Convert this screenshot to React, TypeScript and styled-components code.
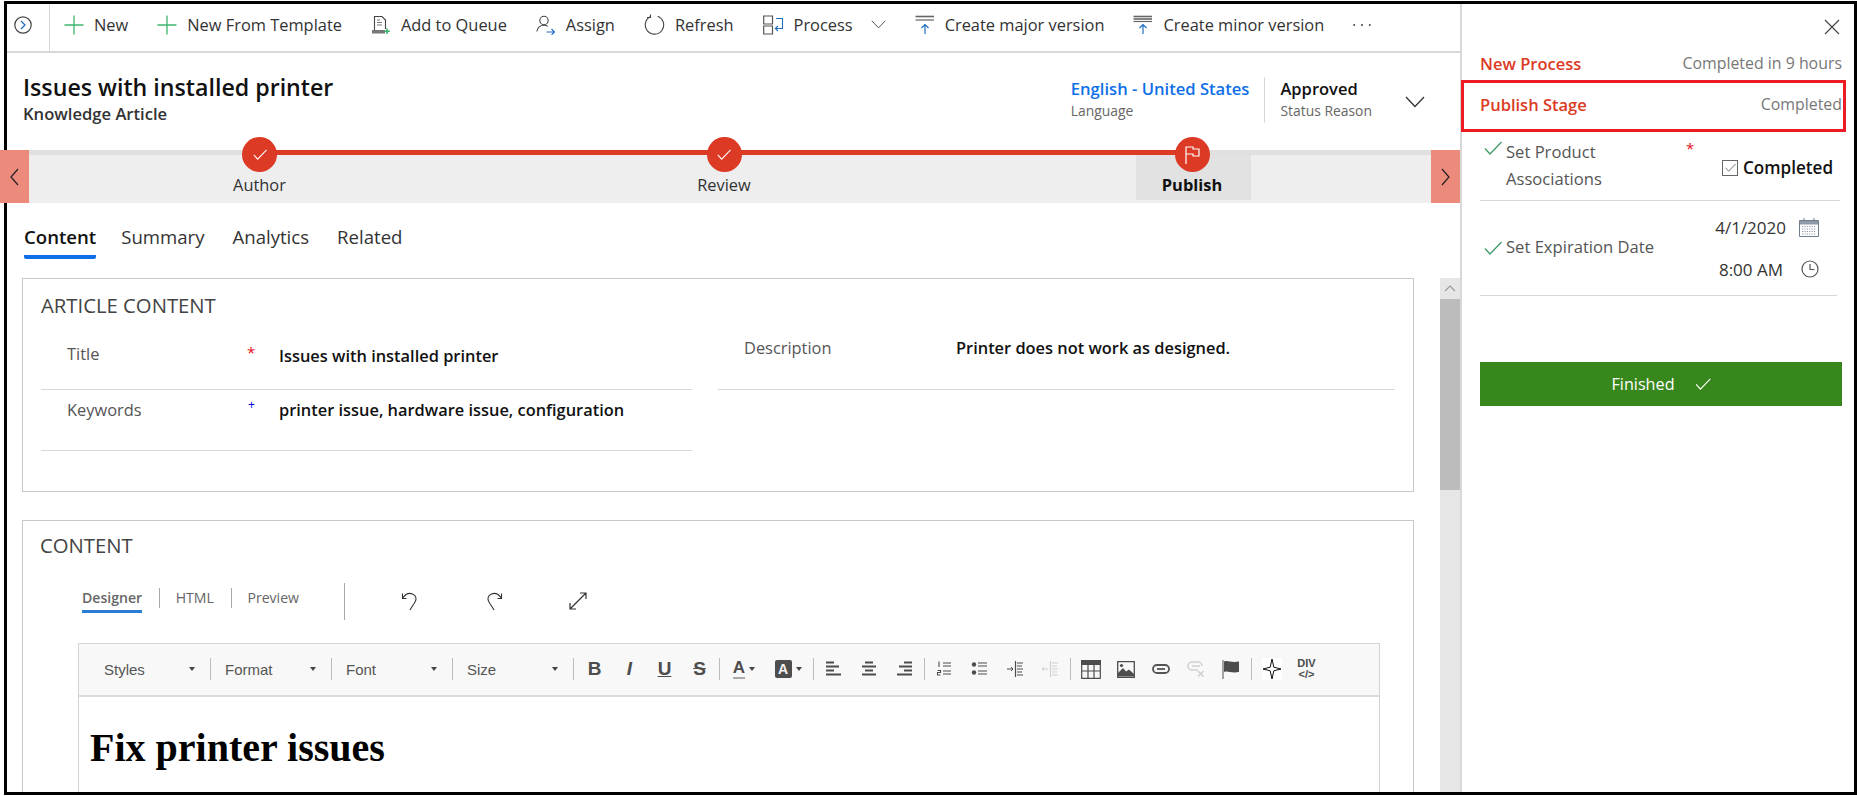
import styled, { createGlobalStyle } from 'styled-components';
import React from 'react';

const GlobalStyle = createGlobalStyle`
  html, body {
    margin: 0;
    padding: 0;
    background: #fff;
    overflow: hidden;
  }
  body {
    padding: 1px 0 0 4px;
    font-family: "Open Sans", "Noto Sans", sans-serif;
    color: #333;
  }
  * { box-sizing: border-box; }
`

const commands = [
  { label: 'New', icon: <PlusIcon /> },
  { label: 'New From Template', icon: <PlusIcon /> },
  { label: 'Add to Queue', icon: <QueueIcon /> },
  { label: 'Assign', icon: <AssignIcon /> },
  { label: 'Refresh', icon: <RefreshIcon /> },
  { label: 'Process', icon: <ProcessIcon />, chevron: true },
  { label: 'Create major version', icon: <VersionIcon bars={1} /> },
  { label: 'Create minor version', icon: <VersionIcon bars={2} /> },
];

function PlusIcon() {
  return (
    <svg width="20" height="20" viewBox="0 0 20 20" fill="none" stroke="#3db56e" strokeWidth="1.3">
      <path d="M10 0.5V19.5M0.5 10H19.5" />
    </svg>
  );
}

function QueueIcon() {
  return (
    <svg width="20" height="20" viewBox="0 0 20 20" fill="none">
      <path d="M3.5 15V1.5H11L14.5 5V14" stroke="#444" strokeWidth="1.1" />
      <path d="M6 5H9M6 7.5H11M6 10H11" stroke="#777" strokeWidth="1" />
      <path d="M1 15H14V18.5H1Z" fill="#777" />
      <path d="M16 13.5V19M13.3 16.2H18.8" stroke="#3db56e" strokeWidth="1.6" />
    </svg>
  );
}

function AssignIcon() {
  return (
    <svg width="20" height="20" viewBox="0 0 20 20" fill="none">
      <circle cx="8" cy="5.5" r="4.2" stroke="#444" strokeWidth="1.1" />
      <path d="M0.8 16.5C1.5 12.5 4 10.3 8 10.3C9.5 10.3 10.7 10.7 11.8 11.4" stroke="#444" strokeWidth="1.1" />
      <path d="M10.5 17H18.5M15.5 14L18.5 17L15.5 20" stroke="#1e6fc0" strokeWidth="1.1" />
    </svg>
  );
}

function RefreshIcon() {
  return (
    <svg width="21" height="21" viewBox="0 0 21 21" fill="none" stroke="#444" strokeWidth="1.1">
      <path d="M6.6 2.6A9.2 9.2 0 1 0 13.6 2.3" />
      <path d="M6.5 0.5V3.5H3" />
    </svg>
  );
}

function ProcessIcon() {
  return (
    <svg width="21" height="20" viewBox="0 0 21 20" fill="none">
      <path d="M0.7 1H9.5V9H0.7ZM0.7 11H9.5V19H0.7Z" stroke="#555" strokeWidth="1.2" />
      <path d="M13 3.5H19.5V13.5H12.5M15 11L12.3 13.5L15 16" stroke="#1e6fc0" strokeWidth="1.1" />
    </svg>
  );
}

function VersionIcon({ bars }: { bars: number }) {
  return (
    <svg width="20" height="20" viewBox="0 0 20 20" fill="none">
      <path d="M0.5 1.5H19" stroke="#666" strokeWidth="1.6" />
      {bars > 1 ? <path d="M0.5 4H19" stroke="#666" strokeWidth="1.6" /> : <path d="M0.5 5H19" stroke="#444" strokeWidth="1" />}
      {bars > 1 && <path d="M0.5 6.5H19" stroke="#666" strokeWidth="1.2" />}
      <path d="M10 19V9.5M6.5 13L10 9.5L13.5 13" stroke="#1e6fc0" strokeWidth="1.2" />
    </svg>
  );
}

function ChevronDown({ size, color }: { size: number; color: string }) {
  return (
    <svg width={size} height={size * 0.6} viewBox="0 0 20 12" fill="none" stroke={color} strokeWidth="1.3">
      <path d="M1 1L10 10.5L19 1" />
    </svg>
  );
}

function CheckMark({ color, width, height }: { color: string; width: number; height: number }) {
  return (
    <svg width={width} height={height} viewBox="0 0 18 14" fill="none" stroke={color} strokeWidth="1.3">
      <path d="M1 7.5L6 13L17.5 1" />
    </svg>
  );
}

function CalendarIcon() {
  return (
    <svg width="20" height="19" viewBox="0 0 20 19" fill="none">
      <path d="M0.5 2.5H19.5V18.5H0.5Z" stroke="#6f7d8c" />
      <path d="M1 3H19V6.5H1Z" fill="#8d99a6" />
      <path d="M5 0V3M15 0V3" stroke="#6f7d8c" />
      <path d="M3 8.5H17M3 11H17M3 13.5H17M3 16H17" stroke="#8d99a6" strokeDasharray="1.2 1.2" />
    </svg>
  );
}

function ClockIcon() {
  return (
    <svg width="18" height="18" viewBox="0 0 18 18" fill="none" stroke="#555" strokeWidth="1.2">
      <circle cx="9" cy="9" r="8" />
      <path d="M9 4V9.5H13.5" />
    </svg>
  );
}

const glyph = (path: React.ReactNode, muted?: boolean) => (
  <svg width="18" height="18" viewBox="0 0 18 18" fill="none" stroke={muted ? '#cfcfcf' : '#4d4d4d'} strokeWidth="1.8">
    {path}
  </svg>
);

const alignGroup = [
  glyph(<path d="M1 2.5H9M1 6.5H14M1 10.5H9M1 14.5H16" />),
  glyph(<path d="M5 2.5H13M2 6.5H16M5 10.5H13M2 14.5H16" />),
  glyph(<path d="M9 2.5H17M4 6.5H17M9 10.5H17M2 14.5H17" />),
];

const listGroup = [
  glyph(
    <>
      <path d="M7 3H15M7 6H15M7 11H15M7 14H15" strokeWidth="1.2" />
      <path d="M3 1.5V7M1.5 10.5H4.5V12.5H1.5V15H4.5" strokeWidth="1.1" />
    </>,
  ),
  glyph(
    <>
      <path d="M7 3H16M7 6H16M7 11H16M7 14H16" strokeWidth="1.2" />
      <circle cx="3" cy="4.5" r="2.2" fill="#4d4d4d" stroke="none" />
      <circle cx="3" cy="12.5" r="2.2" fill="#4d4d4d" stroke="none" />
    </>,
  ),
  glyph(
    <>
      <path d="M9.5 1V17" strokeWidth="1.2" />
      <path d="M11 3H17M11 6H16M11 9H17M11 12H16M11 15H17" strokeWidth="1" />
      <path d="M1 9H7M5 7L7 9L5 11" strokeWidth="1" />
    </>,
  ),
  glyph(
    <>
      <path d="M9.5 1V17" strokeWidth="1.2" />
      <path d="M11 3H17M11 6H16M11 9H17M11 12H16M11 15H17" strokeWidth="1" />
      <path d="M7 9H1M3 7L1 9L3 11" strokeWidth="1" />
    </>,
    true,
  ),
];

const insertGroup = [
  <svg width="20" height="19" viewBox="0 0 20 19" key="table" fill="none">
    <path d="M0 0H20V5H0Z" fill="#4d4d4d" />
    <path d="M0.7 4H19.3V18.3H0.7ZM0.7 11H19.3M7 4V18.3M13 4V18.3" stroke="#4d4d4d" strokeWidth="1.2" />
  </svg>,
  <svg width="18" height="17" viewBox="0 0 18 17" key="image" fill="none">
    <path d="M0.7 0.7H17.3V16.3H0.7Z" stroke="#4d4d4d" strokeWidth="1.3" />
    <path d="M1 15.5V12L6 7L9 10.5L12 8.5L17 13V15.5Z" fill="#4d4d4d" />
    <circle cx="4.5" cy="4.5" r="1.6" fill="#4d4d4d" />
  </svg>,
  <svg width="18" height="10" viewBox="0 0 18 10" key="link" fill="none" stroke="#555" strokeWidth="1.8">
    <rect x="1" y="1" width="16" height="8" rx="4" />
    <path d="M5 5H13" />
  </svg>,
  <svg width="18" height="16" viewBox="0 0 18 16" key="unlink" fill="none" stroke="#cfcfcf" strokeWidth="1.5">
    <path d="M11 9H5A4 4 0 0 1 5 1H11A4 4 0 0 1 15 5" />
    <path d="M5 5H13M11 10L16.5 15.5M16.5 10L11 15.5" />
  </svg>,
  <svg width="18" height="19" viewBox="0 0 18 19" key="flag" fill="none">
    <path d="M1 0V19" stroke="#777" strokeWidth="1.3" />
    <path d="M2 1.5C6 0 9 3 17 1.5V12C9 13.5 6 10.5 2 12Z" fill="#4d4d4d" />
  </svg>,
];

export default function App() {
  return (
    <Frame>
      <GlobalStyle />
      <Main>
        <CommandBar>
          <ToggleButton>
            <svg width="20" height="20" viewBox="0 0 20 20" fill="none">
              <circle cx="10" cy="10" r="8.2" stroke="#444" strokeWidth="1.2" />
              <path d="M8 6L12 10L8 14" stroke="#1e6fc0" strokeWidth="1.3" />
            </svg>
          </ToggleButton>
          <CommandList>
            {commands.map((c) => (
              <CommandItem key={c.label}>
                {c.icon}
                <span>{c.label}</span>
                {c.chevron && (
                  <ChevronSlot>
                    <ChevronDown size={15} color="#555" />
                  </ChevronSlot>
                )}
              </CommandItem>
            ))}
            <svg width="18" height="4" viewBox="0 0 18 4" fill="#444">
              <circle cx="1.2" cy="2" r="1" />
              <circle cx="9" cy="2" r="1" />
              <circle cx="16.8" cy="2" r="1" />
            </svg>
          </CommandList>
        </CommandBar>

        <Header>
          <div>
            <Title>Issues with installed printer</Title>
            <Subtitle>Knowledge Article</Subtitle>
          </div>
          <HeaderMeta>
            <MetaBlock>
              <MetaLink>English - United States</MetaLink>
              <MetaCaption>Language</MetaCaption>
            </MetaBlock>
            <MetaStatus>
              <MetaValue>Approved</MetaValue>
              <MetaCaption>Status Reason</MetaCaption>
            </MetaStatus>
            <ChevronDown size={20} color="#333" />
          </HeaderMeta>
        </Header>

        <ProcessBar>
          <ArrowTile>
            <svg width="9" height="18" viewBox="0 0 9 18" fill="none" stroke="#222" strokeWidth="1.2">
              <path d="M8 1L1 9L8 17" />
            </svg>
          </ArrowTile>
          <Stages>
            <StageLine />
            <Stage>
              <StageDot>
                <CheckMark color="#fff" width={14} height={11} />
              </StageDot>
              <StageLabel>Author</StageLabel>
            </Stage>
            <Stage>
              <StageDot>
                <CheckMark color="#fff" width={14} height={11} />
              </StageDot>
              <StageLabel>Review</StageLabel>
            </Stage>
            <Stage $active>
              <StageDot>
                <svg width="15" height="18" viewBox="0 0 15 18" fill="none" stroke="#fff" strokeWidth="1.2">
                  <path d="M1 0.5V18M1 1H8V3H14V10H8V8H1" />
                </svg>
              </StageDot>
              <StageLabel $active>Publish</StageLabel>
            </Stage>
          </Stages>
          <ArrowTile>
            <svg width="9" height="18" viewBox="0 0 9 18" fill="none" stroke="#222" strokeWidth="1.2">
              <path d="M1 1L8 9L1 17" />
            </svg>
          </ArrowTile>
        </ProcessBar>

        <TabBar>
          <Tab $active>Content</Tab>
          <Tab>Summary</Tab>
          <Tab>Analytics</Tab>
          <Tab>Related</Tab>
        </TabBar>

        <ContentArea>
          <Cards>
            <ArticleCard>
              <CardHeading $top={14}>ARTICLE CONTENT</CardHeading>
              <FieldGrid>
                <FieldColumn>
                  <Field $height={64} $top={16}>
                    <FieldLabel>Title</FieldLabel>
                    <Required>*</Required>
                    <FieldValue $shift={2}>Issues with installed printer</FieldValue>
                  </Field>
                  <Field $height={61} $top={8}>
                    <FieldLabel>Keywords</FieldLabel>
                    <Recommended>+</Recommended>
                    <FieldValue>printer issue, hardware issue, configuration</FieldValue>
                  </Field>
                </FieldColumn>
                <FieldColumn>
                  <Field $height={64} $top={10}>
                    <FieldLabel>Description</FieldLabel>
                    <span />
                    <FieldValue>Printer does not work as designed.</FieldValue>
                  </Field>
                </FieldColumn>
              </FieldGrid>
            </ArticleCard>

            <ContentCard>
              <CardHeading $top={12} $left={17}>CONTENT</CardHeading>
              <ModeBar>
                <ModeTab $active>Designer</ModeTab>
                <ModeTab>HTML</ModeTab>
                <ModeTab $last>Preview</ModeTab>
                <ModeActions>
                  <svg width="18" height="20" viewBox="0 0 18 20" fill="none" stroke="#333" strokeWidth="1.1">
                    <path d="M5.5 7.5H1.5V2.5M1.5 7L5 3.5C9 1 15 3 15 8C15 11 11 15 9 19" />
                  </svg>
                  <svg width="18" height="20" viewBox="0 0 18 20" fill="none" stroke="#333" strokeWidth="1.1">
                    <path d="M12.5 7.5H16.5V2.5M16.5 7L13 3.5C9 1 3 3 3 8C3 11 7 15 9 19" />
                  </svg>
                  <svg width="18" height="18" viewBox="0 0 18 18" fill="none" stroke="#333" strokeWidth="1.2">
                    <path d="M1 17L17 1M11 1H17V7M1 11V17H7" />
                  </svg>
                </ModeActions>
              </ModeBar>
              <Editor>
                <EditorToolbar>
                  {['Styles', 'Format', 'Font', 'Size'].map((name) => (
                    <Combo key={name}>
                      {name}
                      <Caret />
                    </Combo>
                  ))}
                  <ToolGroup>
                    <TextTool>B</TextTool>
                    <TextTool $italic>I</TextTool>
                    <TextTool $underline>U</TextTool>
                    <TextTool $strike>S</TextTool>
                  </ToolGroup>
                  <ToolGroup>
                    <ColorTool>
                      <ColorA>A</ColorA>
                      <Caret />
                    </ColorTool>
                    <ColorTool>
                      <ColorBox>A</ColorBox>
                      <Caret />
                    </ColorTool>
                  </ToolGroup>
                  <ToolGroup>
                    {alignGroup.map((g, i) => (
                      <Tool key={i}>{g}</Tool>
                    ))}
                  </ToolGroup>
                  <ToolGroup>
                    {listGroup.map((g, i) => (
                      <Tool key={i}>{g}</Tool>
                    ))}
                  </ToolGroup>
                  <ToolGroup>
                    {insertGroup.map((g, i) => (
                      <Tool key={i}>{g}</Tool>
                    ))}
                  </ToolGroup>
                  <ToolGroup $last>
                    <Tool>
                      <StarSlot>
                        <svg width="18" height="20" viewBox="0 0 18 20" fill="none" stroke="#111" strokeWidth="1">
                          <path d="M9 0L10.8 8.2L18 10L10.8 11.8L9 20L7.2 11.8L0 10L7.2 8.2Z" />
                        </svg>
                      </StarSlot>
                    </Tool>
                    <Tool>
                      <DivGlyph>
                        <span>DIV</span>
                        <span>{'</>'}</span>
                      </DivGlyph>
                    </Tool>
                  </ToolGroup>
                </EditorToolbar>
                <EditorBody>
                  <h1>Fix printer issues</h1>
                </EditorBody>
              </Editor>
            </ContentCard>
          </Cards>
          <ScrollTrack>
            <ScrollUp>
              <svg width="12" height="7" viewBox="0 0 12 7" fill="none" stroke="#999" strokeWidth="1.1">
                <path d="M1 6L6 1L11 6" />
              </svg>
            </ScrollUp>
            <ScrollThumb />
          </ScrollTrack>
        </ContentArea>
      </Main>

      <Panel>
        <CloseRow>
          <svg width="16" height="16" viewBox="0 0 16 16" fill="none" stroke="#444" strokeWidth="1.2">
            <path d="M1 1L15 15M15 1L1 15" />
          </svg>
        </CloseRow>
        <PanelHead>
          <PanelTitle>New Process</PanelTitle>
          <PanelNote>Completed in 9 hours</PanelNote>
        </PanelHead>
        <StageBox>
          <PanelTitle>Publish Stage</PanelTitle>
          <PanelNote>Completed</PanelNote>
        </StageBox>
        <StepRow $height={69} $top={6}>
          <StepCheck $top={3}>
            <CheckMark color="#3f9a6b" width={18} height={14} />
          </StepCheck>
          <StepLabel>
            Set Product
            <br />
            Associations
          </StepLabel>
          <StepRequired>*</StepRequired>
          <CheckField>
            <CheckBox>
              <CheckMark color="#555" width={11} height={9} />
            </CheckBox>
            <strong>Completed</strong>
          </CheckField>
        </StepRow>
        <StepRow $height={95} $center $inset={3}>
          <StepCheck>
            <CheckMark color="#3f9a6b" width={18} height={14} />
          </StepCheck>
          <StepLabel $shift={-3}>Set Expiration Date</StepLabel>
          <DateColumn>
            <DateRow>
              4/1/2020
              <CalendarIcon />
            </DateRow>
            <DateRow $gap={18}>
              8:00 AM
              <ClockIcon />
            </DateRow>
          </DateColumn>
        </StepRow>
        <FinishButton>
          Finished
          <CheckMark color="#fff" width={16} height={12} />
        </FinishButton>
      </Panel>
    </Frame>
  );
}

const Frame = styled.div`
  width: 1853px;
  height: 794px;
  border: 3px solid #000;
  display: flex;
`
const Main = styled.div`
  width: 1453px;
  display: flex;
  flex-direction: column;
  min-height: 0;
`
const CommandBar = styled.div`
  height: 49px;
  flex: none;
  display: flex;
  border-bottom: 2px solid #d8d8d8;
`
const ToggleButton = styled.div`
  width: 43px;
  padding: 0 0 6px 6px;
  display: flex;
  align-items: center;
  border-right: 1px solid #d8d8d8;
`
const CommandList = styled.div`
  display: flex;
  align-items: center;
  gap: 29px;
  padding: 0 0 6px 14px;
`
const CommandItem = styled.div`
  display: flex;
  align-items: center;
  gap: 10px;
  font-size: 16.4px;
  color: #333;
  white-space: nowrap;
`
const ChevronSlot = styled.span`
  display: flex;
  margin-left: 8px;
`
const Header = styled.div`
  height: 97px;
  flex: none;
  display: flex;
  justify-content: space-between;
  align-items: flex-start;
  padding: 19px 35px 0 16px;
`
const Title = styled.div`
  font-size: 23.2px;
  line-height: 30px;
  font-weight: 600;
  color: #111;
`
const Subtitle = styled.div`
  font-size: 16.6px;
  line-height: 23px;
  font-weight: 600;
  color: #333;
`
const HeaderMeta = styled.div`
  display: flex;
  align-items: center;
  margin-top: 5px;
  svg { margin-top: 4px; }
`
const MetaBlock = styled.div`
  display: flex;
  flex-direction: column;
  padding-right: 15px;
`
const MetaStatus = styled(MetaBlock)`
  border-left: 1px solid #d8d8d8;
  padding: 0 33px 0 15px;
`
const MetaLink = styled.div`
  font-size: 16.6px;
  line-height: 24px;
  font-weight: 600;
  color: #0f6fe8;
`
const MetaValue = styled.div`
  font-size: 16.5px;
  line-height: 24px;
  font-weight: 600;
  color: #111;
`
const MetaCaption = styled.div`
  font-size: 13.9px;
  line-height: 20px;
  padding-bottom: 2px;
  color: #666;
`
const ProcessBar = styled.div`
  height: 53px;
  flex: none;
  margin-left: -7px;
  display: flex;
  background: linear-gradient(#e0e0e0 5px, #eeeeee 5px);
`
const ArrowTile = styled.div`
  width: 29px;
  flex: none;
  background: #ec8b7b;
  display: flex;
  align-items: center;
  justify-content: center;
`
const Stages = styled.div`
  flex: 1;
  display: grid;
  grid-template-columns: 461px 468px 468px;
  position: relative;
`
const StageLine = styled.div`
  position: absolute;
  top: 0;
  left: 230px;
  width: 933px;
  height: 5px;
  background: #dc3a24;
`
const Stage = styled.div<{ $active?: boolean }>`
  position: relative;
  display: flex;
  flex-direction: column;
  align-items: center;
  ${(p) =>
    p.$active &&
    `
    &::before {
      content: '';
      position: absolute;
      top: 5px;
      left: 178px;
      width: 115px;
      height: 45px;
      background: #e2e2e2;
    }
  `}
`
const StageDot = styled.div`
  width: 35px;
  height: 35px;
  margin-top: -13px;
  border-radius: 50%;
  background: #dc3a24;
  display: flex;
  align-items: center;
  justify-content: center;
  position: relative;
`
const StageLabel = styled.div<{ $active?: boolean }>`
  position: relative;
  margin-top: 1px;
  font-size: 16.4px;
  line-height: 24px;
  font-weight: ${(p) => (p.$active ? 700 : 400)};
  color: ${(p) => (p.$active ? '#111' : '#333')};
`
const TabBar = styled.div`
  height: 75px;
  flex: none;
  display: flex;
  gap: 28px;
  padding: 20px 0 0 17px;
`
const Tab = styled.div<{ $active?: boolean }>`
  height: 36px;
  font-size: 18.6px;
  line-height: 28px;
  margin-right: ${(p) => (p.$active ? -3 : 0)}px;
  font-weight: ${(p) => (p.$active ? 600 : 400)};
  color: ${(p) => (p.$active ? '#111' : '#333')};
  border-bottom: ${(p) => (p.$active ? '4px solid #0f6fe8' : 'none')};
  border-radius: 2px;
`
const ContentArea = styled.div`
  flex: 1;
  min-height: 0;
  display: flex;
  overflow: hidden;
`
const Cards = styled.div`
  width: 1433px;
  padding: 0 26px 0 15px;
  display: flex;
  flex-direction: column;
  gap: 28px;
`
const Card = styled.div`
  border: 1px solid #c8c8c8;
  flex: none;
`
const ArticleCard = styled(Card)`
  height: 214px;
  padding: 0 18px;
`
const ContentCard = styled(Card)`
  height: 400px;
`
const CardHeading = styled.div<{ $top: number; $left?: number }>`
  font-size: 20.3px;
  line-height: 24px;
  color: #444;
  padding: ${(p) => p.$top}px 0 0 ${(p) => p.$left || 0}px;
`
const FieldGrid = styled.div`
  display: grid;
  grid-template-columns: 651px 677px;
  gap: 26px;
  margin-top: 9px;
`
const FieldColumn = styled.div`
  display: flex;
  flex-direction: column;
`
const Field = styled.div<{ $height: number; $top: number }>`
  height: ${(p) => p.$height}px;
  padding: ${(p) => p.$top}px 0 0 26px;
  display: grid;
  grid-template-columns: 183px 29px 1fr;
  align-items: start;
  border-bottom: 1px solid #d8d8d8;
  font-size: 16.4px;
  line-height: 24px;
`
const FieldLabel = styled.div`
  color: #555;
`
const FieldValue = styled.div<{ $shift?: number }>`
  font-weight: 600;
  color: #111;
  margin-top: ${(p) => p.$shift || 0}px;
`
const Required = styled.span`
  color: #e81123;
  font-size: 15px;
  line-height: 20px;
  margin-left: -3px;
`
const Recommended = styled.span`
  color: #0000e0;
  font-size: 12px;
  line-height: 14px;
  margin-left: -2px;
`
const ModeBar = styled.div`
  height: 37px;
  margin: 26px 0 23px 59px;
  display: flex;
  align-items: flex-start;
`
const ModeTab = styled.div<{ $active?: boolean; $last?: boolean }>`
  position: relative;
  font-size: 14.1px;
  line-height: 20px;
  margin-top: 5px;
  color: #666;
  font-weight: ${(p) => (p.$active ? 600 : 400)};
  margin-right: ${(p) => (p.$last ? 45 : 33.5)}px;
  padding-bottom: 2px;
  border-bottom: ${(p) => (p.$active ? '3px solid #2b7cd3' : 'none')};
  &::after {
    content: '';
    display: ${(p) => (p.$last ? 'none' : 'block')};
    position: absolute;
    right: -18px;
    top: 0;
    height: 20px;
    border-right: 1px solid #aaa;
  }
`
const ModeActions = styled.div`
  height: 37px;
  border-left: 1px solid #aaa;
  display: flex;
  align-items: center;
  gap: 66px;
  padding: 0 0 2px 56px;
`
const Editor = styled.div`
  margin: 0 33px 0 55px;
  border: 1px solid #d4d4d4;
  height: 300px;
`
const EditorToolbar = styled.div`
  height: 53px;
  background: #f8f8f8;
  border-bottom: 2px solid #dcdcdc;
  display: flex;
  align-items: center;
  padding: 0 0 1px 11px;
  font-family: "Liberation Sans", Arial, sans-serif;
`
const Combo = styled.div`
  width: 121px;
  height: 22px;
  padding: 0 15px 0 14px;
  display: flex;
  align-items: center;
  justify-content: space-between;
  border-right: 1px solid #bbb;
  font-size: 15px;
  color: #555;
`
const Caret = styled.span`
  width: 0;
  height: 0;
  border-left: 3.5px solid transparent;
  border-right: 3.5px solid transparent;
  border-top: 4px solid #444;
`
const ToolGroup = styled.div<{ $last?: boolean }>`
  display: flex;
  align-items: center;
  height: 22px;
  padding: 0 3px 0 2px;
  border-right: ${(p) => (p.$last ? 'none' : '1px solid #bbb')};
`
const Tool = styled.div`
  width: 35px;
  height: 22px;
  display: flex;
  align-items: center;
  justify-content: center;
`
const TextTool = styled(Tool)<{ $italic?: boolean; $underline?: boolean; $strike?: boolean }>`
  padding-left: 2px;
  font-size: 19px;
  font-weight: 700;
  color: #4d4d4d;
  font-style: ${(p) => (p.$italic ? 'italic' : 'normal')};
  text-decoration: ${(p) => (p.$underline ? 'underline' : p.$strike ? 'line-through' : 'none')};
`
const ColorTool = styled.div`
  width: 44px;
  height: 22px;
  display: flex;
  align-items: center;
  justify-content: center;
  gap: 4px;
`
const ColorA = styled.span`
  font-size: 17px;
  line-height: 18px;
  font-weight: 700;
  color: #4d4d4d;
  border-bottom: 2px solid #aaa;
`
const ColorBox = styled.span`
  width: 17px;
  height: 18px;
  border-radius: 2px;
  background: #4d4d4d;
  color: #f4f4f4;
  font-size: 14px;
  line-height: 18px;
  font-weight: 700;
  text-align: center;
`
const StarSlot = styled.div`
  width: 20px;
  height: 22px;
  background: #fff;
  display: flex;
  align-items: center;
  justify-content: center;
`
const DivGlyph = styled.div`
  display: flex;
  flex-direction: column;
  align-items: center;
  font-size: 11px;
  line-height: 11px;
  font-weight: 700;
  color: #4d4d4d;
`
const EditorBody = styled.div`
  padding: 29px 0 0 11px;
  h1 {
    margin: 0;
    font-family: "Liberation Serif", "Times New Roman", serif;
    font-size: 40px;
    line-height: 44px;
    font-weight: 700;
    color: #000;
  }
`
const ScrollTrack = styled.div`
  width: 20px;
  background: #e6e6e6;
  display: flex;
  flex-direction: column;
`
const ScrollUp = styled.div`
  height: 21px;
  display: flex;
  align-items: center;
  justify-content: center;
`
const ScrollThumb = styled.div`
  height: 191px;
  background: #bcbcbc;
`
const Panel = styled.div`
  flex: 1;
  border-left: 2px solid #d8d8d8;
  padding: 0 12px 0 18px;
  display: flex;
  flex-direction: column;
`
const CloseRow = styled.div`
  height: 46px;
  padding: 15px 2px 0 0;
  display: flex;
  justify-content: flex-end;
`
const PanelHead = styled.div`
  height: 30px;
  padding-bottom: 4px;
  display: flex;
  align-items: center;
  justify-content: space-between;
`
const StageBox = styled(PanelHead)`
  height: 52px;
  margin: 0 -4px 0 -19px;
  padding: 0 1px 4px 16px;
  border: 3px solid #ed1c24;
`
const PanelTitle = styled.div`
  font-size: 16.5px;
  font-weight: 600;
  color: #dc3a24;
`
const PanelNote = styled.div`
  font-size: 15.9px;
  color: #777;
`
const StepRow = styled.div<{ $height: number; $top?: number; $center?: boolean; $inset?: number }>`
  height: ${(p) => p.$height}px;
  padding-top: ${(p) => p.$top || 0}px;
  margin-right: ${(p) => 2 + (p.$inset || 0)}px;
  display: flex;
  align-items: ${(p) => (p.$center ? 'center' : 'flex-start')};
  border-bottom: 1px solid #d8d8d8;
`
const StepCheck = styled.div<{ $top?: number }>`
  width: 26px;
  padding: 0 4px;
  display: flex;
  margin-top: ${(p) => p.$top || 0}px;
`
const StepLabel = styled.div<{ $shift?: number }>`
  font-size: 16.6px;
  line-height: 27px;
  color: #555;
  width: 180px;
  white-space: nowrap;
  margin-top: ${(p) => p.$shift || 0}px;
`
const StepRequired = styled.div`
  width: 36px;
  color: #e81123;
  font-size: 15px;
  line-height: 20px;
`
const CheckField = styled.div`
  display: flex;
  align-items: center;
  gap: 5px;
  margin-top: 18px;
  font-size: 17.1px;
  color: #111;
  strong { font-weight: 600; }
`
const CheckBox = styled.div`
  width: 16px;
  height: 16px;
  border: 1px solid #666;
  display: flex;
  align-items: center;
  justify-content: center;
`
const DateColumn = styled.div`
  margin-left: auto;
  padding-right: 18px;
`
const DateRow = styled.div<{ $gap?: number }>`
  height: 42px;
  display: flex;
  align-items: center;
  justify-content: flex-end;
  gap: ${(p) => p.$gap || 13}px;
  font-size: 17px;
  color: #333;
`
const FinishButton = styled.div`
  height: 44px;
  margin-top: 66px;
  background: #38871c;
  color: #fff;
  font-size: 16.2px;
  display: flex;
  align-items: center;
  justify-content: center;
  gap: 20px;
`
